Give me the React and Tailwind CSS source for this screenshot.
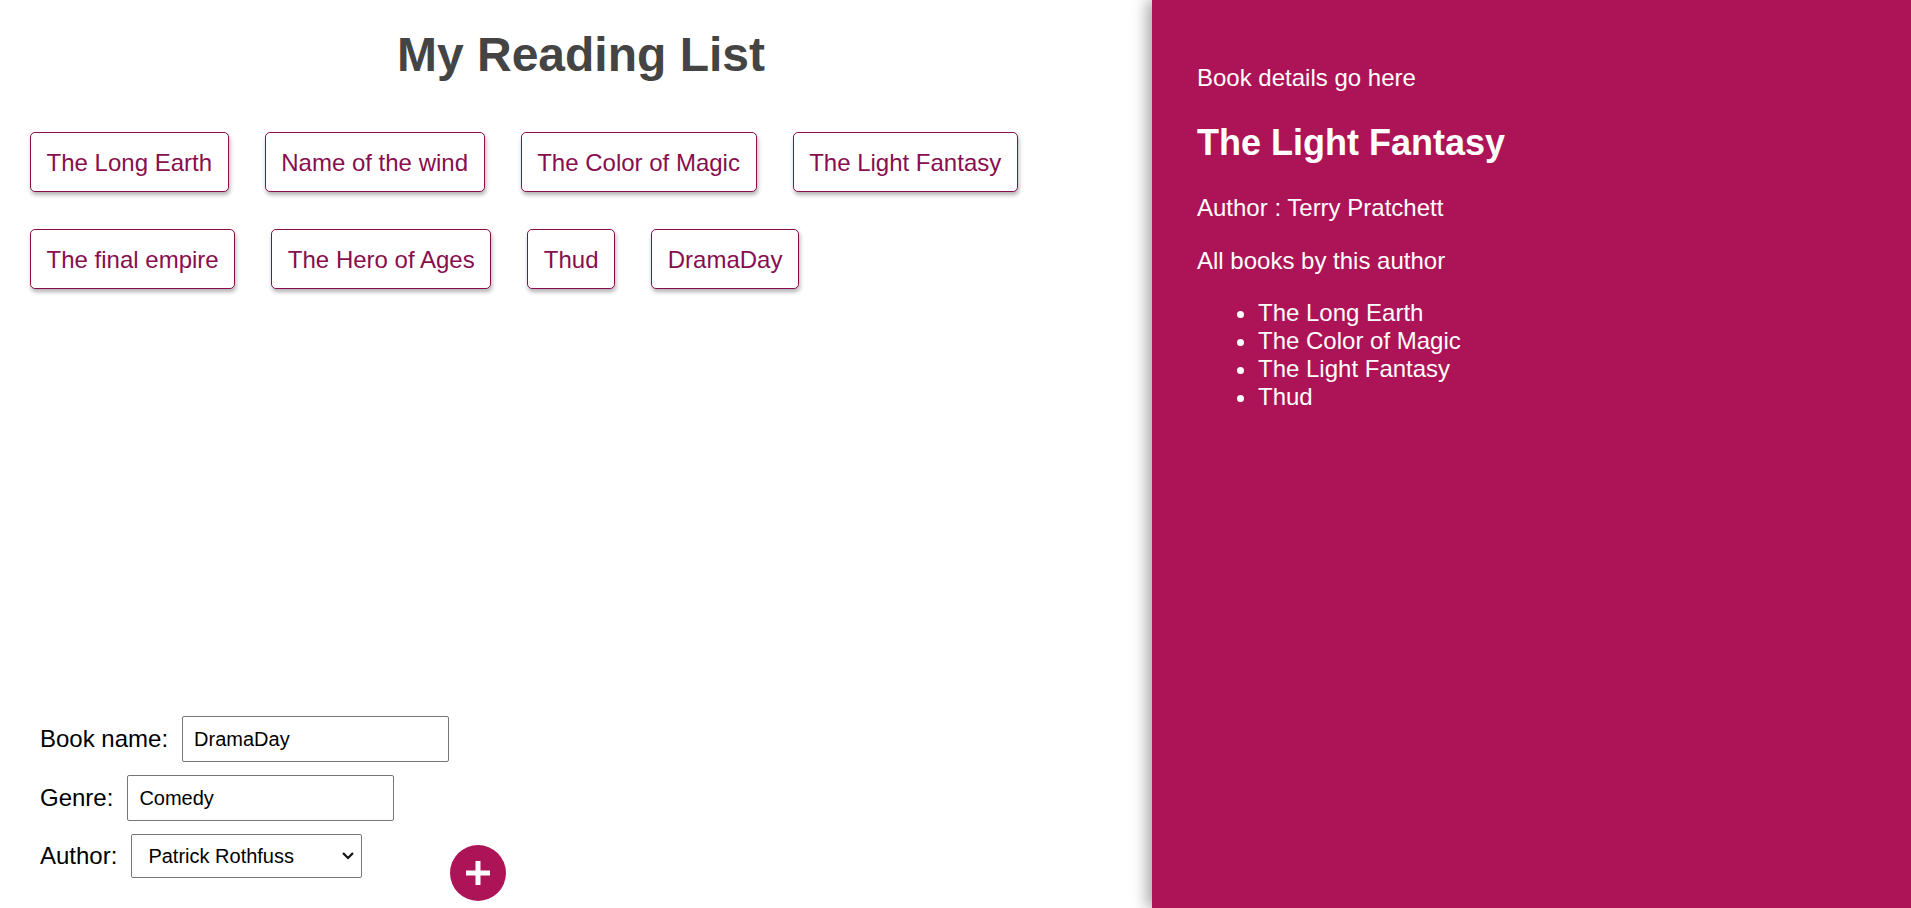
import { useState } from 'react';

const BOOKS = [
  { name: 'The Long Earth', author: 'Terry Pratchett' },
  { name: 'Name of the wind', author: 'Patrick Rothfuss' },
  { name: 'The Color of Magic', author: 'Terry Pratchett' },
  { name: 'The Light Fantasy', author: 'Terry Pratchett' },
  { name: 'The final empire', author: 'Brandon Sanderson' },
  { name: 'The Hero of Ages', author: 'Brandon Sanderson' },
  { name: 'Thud', author: 'Terry Pratchett' },
  { name: 'DramaDay', author: 'Patrick Rothfuss' },
];

const AUTHORS = ['Patrick Rothfuss', 'Terry Pratchett', 'Brandon Sanderson'];

function BookButton({ book, onSelect }) {
  return (
    <button
      type="button"
      onClick={() => onSelect(book)}
      className="h-[60px] rounded-[5px] border border-[#880e4f] bg-white px-[15.6px] pt-px text-[24px] leading-[1.15] text-[#880e4f] shadow-[1px_3px_4px_rgba(0,0,0,0.3)]"
    >
      {book.name}
    </button>
  );
}

function Field({ label, children }) {
  return (
    <div className="flex items-center gap-[14px]">
      <label className="text-[24px] leading-[1.15] text-black">{label}</label>
      {children}
    </div>
  );
}

function AddBookForm() {
  const [name, setName] = useState('DramaDay');
  const [genre, setGenre] = useState('Comedy');
  const [author, setAuthor] = useState('Patrick Rothfuss');

  return (
    <form className="mb-[7px] flex items-end pl-10" onSubmit={(e) => e.preventDefault()}>
      <div className="flex flex-col gap-[13px] pb-[23px]">
        <Field label="Book name:">
          <input
            value={name}
            onChange={(e) => setName(e.target.value)}
            className="h-[46px] w-[267px] rounded-[2px] border border-[#767676] px-[11px] text-[20px] text-black outline-none"
          />
        </Field>
        <Field label="Genre:">
          <input
            value={genre}
            onChange={(e) => setGenre(e.target.value)}
            className="h-[46px] w-[267px] rounded-[2px] border border-[#767676] px-[11px] text-[20px] text-black outline-none"
          />
        </Field>
        <Field label="Author:">
          <div className="relative">
            <select
              value={author}
              onChange={(e) => setAuthor(e.target.value)}
              className="h-[44px] w-[231px] appearance-none rounded-[2px] border border-[#767676] bg-white pl-4 pr-8 text-[20px] text-black outline-none"
            >
              {AUTHORS.map((a) => (
                <option key={a} value={a}>{a}</option>
              ))}
            </select>
            {/* chevron drawn by hand so it matches the native arrow */}
            <svg className="pointer-events-none absolute right-[8px] top-[17px]" width="12" height="9" viewBox="0 0 12 9">
              <path d="M1 2 L6 7 L11 2" fill="none" stroke="#111" strokeWidth="2.2" />
            </svg>
          </div>
        </Field>
      </div>
      <button
        type="submit"
        className="ml-px flex h-[56px] w-[56px] items-center justify-center rounded-full bg-[#ad1457]"
      >
        <svg width="24" height="24" viewBox="0 0 24 24">
          <rect x="9.5" y="0" width="5" height="24" fill="#fff" />
          <rect x="0" y="9.5" width="24" height="5" fill="#fff" />
        </svg>
      </button>
    </form>
  );
}

function BookDetails({ book }) {
  const byAuthor = BOOKS.filter((b) => b.author === book.author);
  return (
    <div className="h-[908px] w-[759px] bg-[#ad1457] pl-[45px] pt-[40px] text-[24px] leading-[1.15] text-white shadow-[-5px_0_14px_rgba(0,0,0,0.35)]">
      <p className="mt-6">Book details go here</p>
      <h2 className="mt-[30px] text-[36px] font-bold leading-[1.15]">{book.name}</h2>
      <p className="mt-[31px]">Author : {book.author}</p>
      <p className="mt-[25px]">All books by this author</p>
      <ul className="mt-[25px] list-disc pl-[61px] leading-[28px]">
        {byAuthor.map((b) => (
          <li key={b.name}>{b.name}</li>
        ))}
      </ul>
    </div>
  );
}

export default function App() {
  const [selected, setSelected] = useState(BOOKS[3]);

  return (
    <div className="flex h-[908px] w-[1911px] overflow-hidden bg-white font-['Liberation_Sans',Arial,sans-serif]">
      <div className="flex w-[1152px] flex-col">
        <h1 className="mt-[27px] pl-[10px] text-center text-[48px] font-bold leading-[1.15] text-[#444]">My Reading List</h1>
        <div className="mt-[50px] flex flex-wrap gap-x-9 gap-y-[37px] pl-[30px] pr-[100px]">
          {BOOKS.map((b) => (
            <BookButton key={b.name} book={b} onSelect={setSelected} />
          ))}
        </div>
        <div className="mt-auto">
          <AddBookForm />
        </div>
      </div>
      <div className="relative z-10">
        <BookDetails book={selected} />
      </div>
    </div>
  );
}
